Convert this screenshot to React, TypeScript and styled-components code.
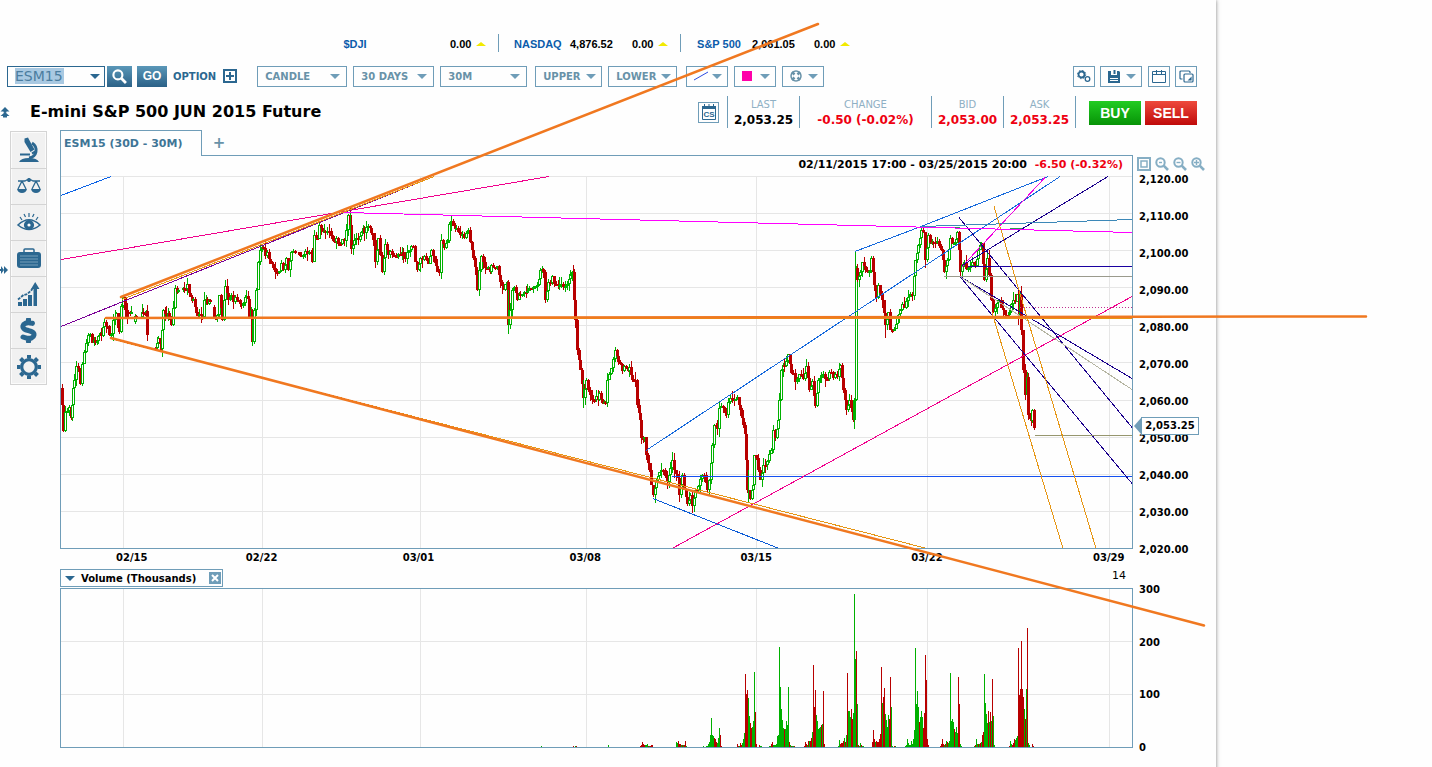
import React from "react";
import styled, { createGlobalStyle } from "styled-components";
import { FaDollarSign } from "react-icons/fa6";

const STEEL = "#6f9db8";
const DEEP = "#2b6790";
const GREEN = "#00b000";
const RED = "#b80000";

const GlobalStyle = createGlobalStyle`
  * { box-sizing: border-box; }
  body {
    margin: 0;
    background: #fefefe;
    font-family: "DejaVu Sans", Verdana, sans-serif;
    font-size: 10px;
    color: #000;
  }
  button, input, select { font: inherit; color: inherit; margin: 0; padding: 0; border-radius: 0; }
  button { cursor: pointer; background: none; border: 0; }
  svg { display: block; }
`;

const Page = styled.div`
  position: relative;
  display: grid;
  grid-template-columns: minmax(0, 1fr) 216px;
  min-height: 100vh;
  overflow: hidden;
`;

const Platform = styled.main`
  display: flex;
  flex-direction: column;
  padding: 33px 0 19px;
  box-shadow: 0 0 4px rgba(0, 0, 0, 0.5);
`;

/* ---------- index ticker ---------- */
const Ticker = styled.div`
  display: flex;
  padding-left: 316px;
  height: 20px;
  align-items: center;
  font: bold 11px/20px "Liberation Sans", Arial, sans-serif;
`;
const Index = styled.div<{ $rule?: boolean }>`
  display: grid;
  grid-template-columns: 46px 42px 22px 10px;
  column-gap: 10px;
  align-items: center;
  width: 182px;
  height: 18px;
  padding-left: 15px;
  border-left: 1px solid ${(p) => (p.$rule ? STEEL : "transparent")};
`;
const IndexName = styled.a`
  color: #0b5cab;
  text-align: center;
  text-decoration: none;
  white-space: nowrap;
`;
const Change = styled.span`
  margin-left: 10px;
`;
const Up = styled.i`
  justify-self: end;
  width: 0;
  border: 5px solid transparent;
  border-top: 0;
  border-bottom: 4px solid #f2ea00;
  margin-right: -4px;
`;

/* ---------- toolbar ---------- */
const Toolbar = styled.div`
  display: flex;
  align-items: center;
  height: 22px;
  margin: 12px 19px 0 7px;
  font-weight: bold;
  color: #6892a8;
`;
const SymbolBox = styled.div`
  display: flex;
  align-items: center;
  justify-content: space-between;
  width: 98px;
  height: 21px;
  padding: 0 4px 0 7px;
  border: 1px solid ${DEEP};
`;
const SymbolInput = styled.input`
  width: 49px;
  height: 16px;
  border: 0;
  outline: 0;
  background: #a9c9e2;
  color: #4b7d9f;
  font-size: 14px;
  font-weight: normal;
`;
const Caret = styled.i<{ $dark?: boolean }>`
  width: 0;
  height: 0;
  border: 5px solid transparent;
  border-bottom: 0;
  border-top-color: ${(p) => (p.$dark ? DEEP : STEEL)};
  pointer-events: none;
`;
const Solid = styled.button<{ $w: number; $ml: number }>`
  display: grid;
  place-items: center;
  width: ${(p) => p.$w}px;
  height: 21px;
  margin-left: ${(p) => p.$ml}px;
  background: linear-gradient(#5a97b8, #2b6187);
  color: #fff;
  font: bold 12px "Liberation Sans", Arial, sans-serif;
`;
const OptionButton = styled.button`
  display: flex;
  align-items: center;
  gap: 7px;
  margin: 0 20px 0 6px;
  color: ${DEEP};
  font-weight: bold;
`;
const Picker = styled.span<{ $w: number; $ml?: number }>`
  position: relative;
  display: inline-flex;
  align-items: center;
  width: ${(p) => p.$w}px;
  height: 21px;
  margin-left: ${(p) => p.$ml ?? 6}px;
  border: 1px solid ${STEEL};
  ${Caret} { position: absolute; right: 6px; }
`;
const Select = styled.select`
  appearance: none;
  width: 100%;
  height: 100%;
  padding: 0 7px;
  border: 0;
  background: transparent;
  font-weight: bold;
`;
const MenuButton = styled.button<{ $w: number; $ml?: number }>`
  display: flex;
  align-items: center;
  justify-content: space-between;
  width: ${(p) => p.$w}px;
  height: 21px;
  margin-left: ${(p) => p.$ml ?? 6}px;
  padding: 0 5px 0 7px;
  border: 1px solid ${STEEL};
  font-weight: bold;
`;
const IconButton = styled.button<{ $ml?: number }>`
  display: grid;
  place-items: center;
  width: 22px;
  height: 21px;
  margin-left: ${(p) => p.$ml ?? 6}px;
  border: 1px solid ${STEEL};
  color: ${DEEP};
`;
const Swatch = styled.i`
  width: 10px;
  height: 10px;
  background: #ff00a8;
`;
const Spacer = styled.span`
  flex: 1;
`;

/* ---------- instrument header ---------- */
const Header = styled.div`
  display: flex;
  align-items: center;
  height: 32px;
  margin: 9px 19px 2px 0;
`;
const Title = styled.h1`
  flex: 1;
  margin: 0 0 0 20px;
  font: bold 16px/20px "DejaVu Sans", Verdana, sans-serif;
`;
const CsButton = styled.button`
  display: grid;
  place-items: center;
  width: 21px;
  height: 21px;
  margin-right: 8px;
  border: 1px solid ${STEEL};
`;
const Quotes = styled.dl`
  display: flex;
  margin: 0 13px 0 0;
  border-right: 1px solid ${STEEL};
`;
const Quote = styled.div<{ $w: number }>`
  width: ${(p) => p.$w}px;
  height: 32px;
  border-left: 1px solid ${STEEL};
  text-align: center;
  white-space: nowrap;
`;
const QuoteLabel = styled.dt`
  color: #8fb0c4;
  line-height: 17px;
`;
const QuoteValue = styled.dd<{ $down?: boolean }>`
  margin: 0;
  font-size: 12px;
  line-height: 15px;
  font-weight: bold;
  color: ${(p) => (p.$down ? "#ee0011" : "#000")};
`;
const Trade = styled.button<{ $sell?: boolean }>`
  width: 52px;
  height: 24px;
  margin: 2px 0 0 ${(p) => (p.$sell ? 4 : 0)}px;
  background: ${(p) => (p.$sell ? "linear-gradient(#ee4a3c, #c00a0a)" : "linear-gradient(#22cc22, #079307)")};
  color: #fff;
  font: bold 14px "Liberation Sans", Arial, sans-serif;
`;

/* ---------- work area ---------- */
const Work = styled.div`
  display: grid;
  grid-template-columns: 60px minmax(0, 1fr) 83px;
`;
const Rail = styled.nav`
  display: flex;
  align-items: center;
  align-self: start;
`;
const Tools = styled.div`
  width: 37px;
  margin: 1px 0 0 2px;
  border: 1px solid #d4d4d4;
  box-shadow: inset 0 0 0 1px #fbfbfb;
  background: #f1f1f1;
`;
const Tool = styled.button`
  display: grid;
  place-items: center;
  width: 100%;
  height: 36px;
  color: ${DEEP};
  & + & { border-top: 1px solid #d4d4d4; }
`;
const Expand = styled.button`
  margin-top: 24px;
`;
const Tabs = styled.div`
  display: flex;
  height: 25px;
`;
const Tab = styled.button`
  position: relative;
  width: 142px;
  padding: 0 0 0 4px;
  margin-bottom: -1px;
  border-top: 1px solid ${STEEL};
  background: #fefefe;
  box-shadow: -1px 0 ${STEEL} inset, 1px 0 ${STEEL} inset;
  color: #3f7596;
  font-size: 11px;
  font-weight: bold;
  text-align: left;
`;
const AddTab = styled.button`
  width: 34px;
  color: #6892a8;
  font-size: 15px;
  font-weight: bold;
`;
const Panel = styled.section`
  border: 1px solid ${STEEL};
`;
const Range = styled.p`
  margin: 0;
  padding-right: 9px;
  height: 20px;
  font-size: 11px;
  line-height: 17px;
  font-weight: bold;
  text-align: right;
  span { margin-left: 4px; color: #ee0011; }
`;
const Drawing = styled.svg<{ $h: number }>`
  width: 100%;
  height: ${(p) => p.$h}px;
`;
const Dates = styled.div`
  display: grid;
  grid-template-columns: 130fr 157fr 167fr 171fr 171fr 182fr 40fr;
  height: 20px;
  padding-left: 56px;
  font-weight: bold;
  line-height: 17px;
`;
const VolumeBar = styled.div`
  display: flex;
  justify-content: space-between;
  height: 19px;
  padding-right: 7px;
`;
const VolumeTitle = styled.div`
  display: flex;
  align-items: center;
  width: 163px;
  height: 18px;
  padding: 0 1px 0 4px;
  border: 1px solid ${STEEL};
  font-weight: bold;
  ${Caret} { margin-right: 6px; }
`;
const Close = styled.button`
  display: grid;
  place-items: center;
  width: 12px;
  height: 12px;
  margin-left: auto;
  background: ${STEEL};
`;
const Period = styled.span`
  font-size: 11px;
  line-height: 14px;
`;
const Axis = styled.div`
  position: relative;
  padding: 27px 0 0 6px;
  font-weight: bold;
  line-height: 12px;
`;
const ZoomRow = styled.div`
  display: flex;
  gap: 4px;
  height: 17px;
  margin-left: -2px;
  color: ${STEEL};
  button { display: grid; place-items: center; width: 14px; height: 14px; color: #86aec4; }
`;
const Scale = styled.div<{ $h: number; $mt?: number }>`
  display: flex;
  flex-direction: column;
  justify-content: space-between;
  height: ${(p) => p.$h}px;
  margin-top: ${(p) => p.$mt ?? 0}px;
`;
const PriceFlag = styled.output`
  position: absolute;
  top: 287px;
  left: 8px;
  display: grid;
  place-items: center;
  width: 58px;
  height: 18px;
  border: 1px solid ${STEEL};
  background: #fff;
  &::before {
    content: "";
    position: absolute;
    left: -8px;
    border: 8px solid transparent;
    border-left: 0;
    border-right: 7px solid ${STEEL};
  }
`;
const Ink = styled.svg`
  position: absolute;
  top: 0;
  left: 0;
  width: 100%;
  height: 767px;
  pointer-events: none;
`;

/* ---------- data ---------- */
const GRID_X = [123, 262, 420, 586, 756, 927, 1109];
const GRID_Y = [214, 251, 288, 326, 363, 401, 438, 475, 512];
const DATES = ["02/15", "02/22", "03/01", "03/08", "03/15", "03/22", "03/29"];
const PRICES = ["2,120.00", "2,110.00", "2,100.00", "2,090.00", "2,080.00", "2,070.00", "2,060.00", "2,050.00", "2,040.00", "2,030.00", "2,020.00"];

/* price path: x,y turning points; "/" marks a session gap */
const PATH = `61,388 62,405 63,431 65,412 67,408 69,410 71,418 72,405 73,388 74,380 76,366 79,370 80,384 82,364 84,352 86,345 88,338 90,335 92,343 95,341 98,336 101,332 104,322 107,325 109,335 111,338 113,320 116,314 118,328 119,330 121,306 123,300 125,310 127,318 / 128,312 131,315 / 133,322 136,316 / 140,317 143,313 146,308 147,335 / 153,348 155,348 158,338 161,349 162,330 163,310 166,315 169,316 171,325 173,308 175,288 178,293 / 181,290 184,290 187,288 190,297 193,300 196,313 199,315 202,318 204,300 207,303 210,303 / 213,307 214,318 217,312 219,295 222,320 224,300 225,286 228,300 231,297 235,300 238,302 241,305 243,300 246,296 248,298 249,318 251,310 252,342 254,310 256,290 258,262 260,250 263,252 267,253 270,260 273,268 277,270 281,265 283,272 286,258 288,270 291,252 295,257 / 297,252 303,253 307,256 311,250 312,262 314,235 317,242 319,225 322,232 325,232 329,231 333,238 336,240 340,243 344,240 346,230 348,215 350,225 351,249 354,240 358,240 361,232 364,230 368,229 371,232 373,240 375,262 378,238 380,255 382,272 385,244 388,255 392,252 396,255 400,253 405,256 408,250 411,243 413,245 415,262 417,270 420,258 424,260 428,261 431,250 434,262 437,270 439,275 441,240 444,248 447,243 449,224 453,226 456,230 460,236 464,234 468,233 470,242 473,258 476,275 477,290 479,270 481,256 485,268 488,270 493,268 497,267 500,282 503,290 507,285 508,325 510,310 512,290 514,285 517,300 520,295 524,295 529,292 533,288 537,288 540,270 543,275 545,300 548,282 552,280 556,285 559,283 563,288 567,282 572,272 574,300 575,320 577,350 580,370 583,398 586,380 588,390 592,400 596,400 599,395 602,403 605,400 607,380 611,368 615,350 618,362 622,368 626,368 629,370 632,380 635,382 637,405 640,420 641,438 644,435 646,455 649,470 651,485 653,495 656,480 659,472 663,470 667,482 670,468 672,460 674,470 677,478 679,495 682,475 684,490 687,504 690,495 692,506 695,490 698,485 702,478 704,475 707,490 709,480 712,445 714,425 717,430 719,408 723,410 726,415 728,402 732,402 737,400 740,410 743,425 745,430 746,460 747,490 750,495 753,485 754,455 756,460 760,480 763,465 767,458 771,450 773,430 775,438 778,420 779,400 781,370 784,368 788,354 791,373 795,378 799,375 803,380 806,366 809,390 812,385 815,406 818,380 821,374 825,377 831,375 837,373 840,365 843,390 846,410 849,400 851,408 853,420 854,400 856,268 857,280 860,272 862,262 865,270 869,268 871,258 874,285 876,298 878,285 882,300 885,325 888,312 890,330 894,330 897,318 900,310 904,305 908,297 912,292 915,260 918,245 921,230 923,230 925,260 928,235 930,240 935,242 941,248 944,272 947,260 950,238 954,245 957,232 959,250 960,272 964,265 968,270 972,262 975,268 978,250 981,247 984,280 987,258 989,275 991,300 993,312 997,303 1001,305 1005,315 1009,308 1013,300 1017,297 1019,315 1020,294 1021,330 1023,370 1025,395 1027,377 1028,415 1031,420 1032,410 1034,428`;

type Candle = { x: number; open: number; close: number; hi: number; lo: number };

function buildCandles(): Candle[] {
  const out: Candle[] = [];
  let seed = 17;
  const rnd = () => {
    seed = (seed * 1103515245 + 12345) % 2147483648;
    return seed / 2147483648;
  };
  PATH.split("/").forEach((session) => {
    const pts = session.trim().split(" ").map((p) => p.split(",").map(Number));
    let last = pts[0][1];
    for (let i = 1; i < pts.length; i++) {
      const [x0, y0] = pts[i - 1];
      const [x1, y1] = pts[i];
      const steps = Math.max(1, Math.round((x1 - x0) / 2));
      for (let s = 1; s <= steps; s++) {
        const t = s / steps;
        const flat = Math.abs(y1 - y0) < 8;
        const close = Math.round(y0 + (y1 - y0) * t + (flat ? (rnd() - 0.5) * 8 : 0));
        const top = Math.min(last, close);
        const bottom = Math.max(last, close);
        const wick = rnd() > 0.5 ? 8 : 3;
        out.push({ x: Math.round(x0 + (x1 - x0) * t), open: last, close, hi: top - Math.round(rnd() * wick), lo: bottom + Math.round(rnd() * wick) });
        last = close;
      }
    }
  });
  return out;
}
const CANDLES = buildCandles();

/* volume bars by session: first x, then heights; negative is a down bar */
const VOLUME: [number, number[]][] = [
  [541, [1]], [573, [-1, 0, 1, -1]], [608, [2]],
  [640, [-1, -2, -5, -3, -2, 2, 2, 3, -1, 1, -1, -2, -2]],
  [676, [5, 4, -6, -3, -3, 2, -2, 2, -2, -6, 1]],
  [703, [1, 0, 0, 1, 1, 3, 5, 12, 29, 12, 11, -9, -8, -5, 4, 9, 19, -12, -1]],
  [737, [-3, -1, 1, -4, -2, 4, 8, 14, -73, -53, -57, 49, 31, -24, -19, 20, 26, 75, -35, -3, 0, 0, -2, 1, 1]],
  [769, [1, 1, -3, -5, 2, 2, 2, 3, 11, 12, 100, 60, 38, 27, 19, -18, 18, 26, 22, 60, -5, 2, -1, 1, 1, -1]],
  [804, [-1, -5, -3, 2, -6, 6, -6, -9, 15, -82, -40, -57, 32, 26, 18, 19, 20, -22, 23, -56, -3]],
  [838, [1, 7, -3, -4, -4, -6, 9, -5, 12, -74, 36, 36, 30, -38, -28, 34, 153, 88, -96, 43, -2, 1, 4, -2, 1, 1]],
  [872, [-5, -17, -8, 5, -6, -5, -5, -8, -13, -80, 44, -50, -59, 33, 27, 20, 32, -28, -70, 40, 1, 0, -1, 1]],
  [905, [1, 2, 8, 4, 2, 2, 6, 3, 8, 17, 99, 43, 56, 40, -25, 30, 36, 30, -19, -34, -92, -67, -8, -2]],
  [940, [-1, -3, -8, -3, 2, -3, 6, -5, 4, 6, 74, 26, 28, 25, -18, 15, 20, 14, -70, -43, 3, 1]],
  [974, [1, -2, 8, 3, -3, 3, -4, 5, -12, -15, 73, 44, 33, 24, -36, 25, -35, 26, -68, 31, 2]],
  [1009, [-1, 6, 3, -2, -4, -8, 7, 9, 11, -99, -52, -58, -106, -58, -50, 38, -28, 58, -119, 4, 2, 0, 0, -3, -1]],
];

const SPREAD: [number, number, number, number, string][] = [
  [61, 195, 111, 176, "#0a62e6"], [646, 450, 1060, 176, "#1468dc"],
  [855, 251, 921, 226, "#1468dc"], [921, 226, 1048, 176, "#1468dc"],
  [653, 498, 779, 548, "#0a5ad6"], [672, 476, 1132, 476, "#1450f0"],
  [61, 259, 549, 176, "#f0008c"], [672, 548, 1132, 296, "#f0008c"],
  [61, 326, 434, 176, "#7a0096"], [962, 266, 1045, 177, "#f000e0"],
  [962, 265, 1108, 176, "#1a008c"], [968, 266, 1132, 266, "#1a00a0"],
  [959, 217, 1132, 427, "#1a008c"], [960, 276, 1132, 378, "#1a008c"],
  [960, 276, 1132, 483, "#1a008c"], [921, 226, 1132, 219, "#3c88b8"],
  [944, 276, 1132, 276, "#9a9a8c"], [960, 276, 1132, 389, "#b4b4a0"],
  [1035, 435, 1132, 435, "#96966e"], [994, 206, 1096, 548, "#e69614"],
  [992, 312, 1063, 548, "#e69614"], [122, 299, 434, 176, "#e69614"],
  [110, 338, 927, 548, "#e69614"], [104, 318, 1132, 318, "#e69614"],
  [921, 227, 960, 227, "#2a9a50"], [1010, 228, 1034, 229, "#2a9a50"],
];

/* ---------- icons ---------- */
const Lens = ({ mark = "", size = 14 }: { mark?: string; size?: number }) => (
  <svg width={size} height={size} viewBox="0 0 14 14" fill="none" stroke="currentColor" strokeWidth="2">
    <circle cx="5.5" cy="5.5" r="4.2" />
    <path d="M8.7 8.7 13 13" strokeWidth="2.6" />
    {mark && <path d={mark} strokeWidth="1.4" />}
  </svg>
);
const Microscope = () => (
  <svg width="24" height="26" viewBox="0 0 24 26" fill="currentColor">
    <path d="M7.500 1.500 11 .5l1 2 5.500 10-4 2.500L7.500 5zM14.500 15.500l3.500-2 1 2-3.500 2z" />
    <path d="M16 6q5 3 4 9-1 5-7 6" fill="none" stroke="currentColor" strokeWidth="2.800" transform="translate(-1 0)" />
    <path d="M3 16.500h10v2H3zM2 25q2-4 10-4t10 4z" />
  </svg>
);
const Scales = () => (
  <svg width="26" height="24" viewBox="0 0 26 24" fill="none" stroke="currentColor" strokeWidth="1.3">
    <path d="M2 6h7q4-3 8 0h7M13 3v4M6 6 2 14M6 6l4 8M20 6l-4 8M20 6l4 8" />
    <path d="M1 14h10q-1 4-5 4t-5-4ZM15 14h10q-1 4-5 4t-5-4Z" fill="currentColor" stroke="none" />
    <circle cx="13" cy="5" r="2" fill="currentColor" stroke="none" />
  </svg>
);
const Eye = () => (
  <svg width="26" height="24" viewBox="0 0 26 24" fill="none" stroke="currentColor" strokeWidth="1.6">
    <path d="M2 14Q13 3.500 24 14 13 23 2 14Z" />
    <circle cx="13" cy="14" r="4.300" fill="currentColor" />
    <circle cx="13" cy="14" r="1.600" fill="#fff" stroke="none" />
    <path d="M13 2v4M8 3l1.500 3M18 3l-1.500 3M4 6l2 3M22 6l-2 3" strokeWidth="1.200" />
  </svg>
);
const Briefcase = () => (
  <svg width="26" height="24" viewBox="0 0 26 24">
    <path d="M8 5V3q0-1 1-1h8q1 0 1 1v2" fill="none" stroke="currentColor" strokeWidth="1.500" />
    <rect x="1" y="5" width="24" height="16" rx="3" fill="currentColor" />
    <path d="M4 9h18M4 12h18M4 15h18M4 18h18" stroke="#7fa6c0" strokeWidth="0.900" />
  </svg>
);
const Growth = () => (
  <svg width="24" height="26" viewBox="0 0 24 26" fill="currentColor">
    <path d="M1 20h4v4H1zM6 17h4v7H6zM11 13h4v11h-4zM16.500 6h3.500v18h-3.500zM18.200 0l4.300 7h-8.500z" />
    <path d="M1 17.500 6.500 13l4-1 5-5" fill="none" stroke="currentColor" strokeWidth="1.800" strokeDasharray="3 1" />
  </svg>
);
const Gear = () => (
  <svg width="26" height="26" viewBox="-13 -13 26 26" stroke="currentColor" fill="none">
    <circle r="7.300" strokeWidth="3.200" />
    {[0, 45, 90, 135, 180, 225, 270, 315].map((a) => (
      <path key={a} d="M0-8.500V-12" strokeWidth="4" transform={`rotate(${a})`} />
    ))}
  </svg>
);
const Chevrons = ({ side }: { side?: boolean }) => (
  <svg width={side ? 8 : 10} height="12" viewBox={side ? "0 0 8 12" : "0 0 10 12"} fill={DEEP}>
    {side ? <path d="M0 5h1V2l3 4-3 4V7H0zM4 2l4 4-4 4z" /> : <path d="M5 1 9.500 5.500H6.500V6.500H3.500V5.500H.5zM5 6l4.500 4H7v1.500H3V10H.5z" />}
  </svg>
);

const TOOLS: [string, React.ReactNode][] = [
  ["Research", <Microscope />],
  ["Compare", <Scales />],
  ["Watch", <Eye />],
  ["Portfolio", <Briefcase />],
  ["Trends", <Growth />],
  ["Trade", <FaDollarSign size={25} strokeWidth={40} stroke="currentColor" />],
  ["Settings", <Gear />],
];
const INDEXES = [["$DJI", "", "0.00"], ["NASDAQ", "4,876.52", "0.00"], ["S&P 500", "2,061.05", "0.00"]];
const QUOTES: [string, string, number, boolean][] = [
  ["LAST", "2,053.25", 72, false],
  ["CHANGE", "-0.50 (-0.02%)", 132, true],
  ["BID", "2,053.00", 72, true],
  ["ASK", "2,053.25", 72, true],
];

const PriceChart = () => (
  <Drawing $h={372} viewBox="61 176 1071 372" preserveAspectRatio="none" shapeRendering="crispEdges" role="img" aria-label="ESM15 price">
    <g stroke="#e6e6e6">
      <path d="M61 176.500H1132" />
      {GRID_Y.map((y) => <path key={y} d={`M61 ${y - 0.5}H1132`} />)}
      {GRID_X.map((x) => <path key={x} d={`M${x + 0.5} 176V548`} />)}
    </g>
    {CANDLES.map((c, i) => {
      const up = c.close < c.open;
      const top = Math.min(c.open, c.close);
      const h = Math.max(2, Math.abs(c.close - c.open));
      return (
        <g key={i}>
          <path d={`M${c.x + 0.5} ${c.hi}V${c.lo}`} stroke={up ? GREEN : RED} />
          {up && h > 3
            ? <rect x={c.x - 0.5} y={top + 0.5} width={2} height={h - 1} fill="#fff" stroke={GREEN} />
            : <rect x={c.x - 1} y={top} width={3} height={h} fill={up ? GREEN : RED} />}
        </g>
      );
    })}
    <path d="M508.500 290V334M583.500 380V408M748.500 470V503M854.500 400V429M252.500 320V346M350.500 213V240M855.500 251V400" stroke={GREEN} />
    <path d="M573.500 265V300M1018.500 290V325M477.500 270V290M885.500 300V338" stroke={RED} />
    {SPREAD.map(([x1, y1, x2, y2, c], i) => (
      <line key={i} x1={x1} y1={y1 + 0.5} x2={x2} y2={y2 + 0.5} stroke={c} />
    ))}
    <path d="M344 212.500 1132 232.500" stroke="#ff00ff" />
    <path d="M1020 307.500H1132" stroke="#c03090" strokeDasharray="1 2" />
  </Drawing>
);

const VolumeChart = () => (
  <Drawing $h={158} viewBox="61 589 1071 158" preserveAspectRatio="none" shapeRendering="crispEdges" role="img" aria-label="Volume in thousands">
    <g stroke="#e6e6e6">
      <path d="M61 641.500H1132M61 694.500H1132" />
      {GRID_X.map((x) => <path key={x} d={`M${x + 0.5} 589V747`} />)}
    </g>
    {VOLUME.flatMap(([x0, bars]) =>
      bars.map((v, i) => <rect key={`${x0}-${i}`} x={x0 + i} y={747 - Math.abs(v)} width={1} height={Math.abs(v)} fill={v > 0 ? GREEN : RED} />)
    )}
  </Drawing>
);

export default function App() {
  return (
    <Page>
      <GlobalStyle />
      <Platform>
        <Ticker>
          {INDEXES.map(([name, value, change], i) => (
            <Index key={name} $rule={i > 0}>
              <IndexName href="#">{name}</IndexName>
              <span>{value}</span>
              <Change>{change}</Change>
              <Up />
            </Index>
          ))}
        </Ticker>

        <Toolbar>
          <SymbolBox>
            <SymbolInput aria-label="Symbol" defaultValue="ESM15" />
            <Caret $dark />
          </SymbolBox>
          <Solid $w={25} $ml={2} aria-label="Search"><Lens size={15} /></Solid>
          <Solid $w={30} $ml={5}>GO</Solid>
          <OptionButton>
            OPTION
            <svg width="14" height="14" viewBox="0 0 14 14" fill="none" stroke={DEEP} strokeWidth="2"><path d="M1 1h12v12H1zM7 3v8M3 7h8" /></svg>
          </OptionButton>
          <Picker $w={90} $ml={0}><Select aria-label="Chart type"><option>CANDLE</option></Select><Caret /></Picker>
          <Picker $w={81}><Select aria-label="Range"><option>30 DAYS</option></Select><Caret /></Picker>
          <Picker $w={87}><Select aria-label="Interval"><option>30M</option></Select><Caret /></Picker>
          <MenuButton $w={67} $ml={8}>UPPER<Caret /></MenuButton>
          <MenuButton $w={69}>LOWER<Caret /></MenuButton>
          <MenuButton $w={42} $ml={9} aria-label="Line tool">
            <svg width="15" height="10" viewBox="0 0 15 10"><path d="M0 9 14 1" stroke="#2a4ae0" /></svg>
            <Caret />
          </MenuButton>
          <MenuButton $w={42} aria-label="Colour"><Swatch /><Caret /></MenuButton>
          <MenuButton $w={42} aria-label="Crosshair">
            <svg width="12" height="12" viewBox="-6 -6 12 12" fill="none" stroke="currentColor">
              <circle r="5" strokeWidth="1.500" />
              <path d="M-4-4-1.500-1.500M4-4 1.500-1.500M-4 4-1.500 1.500M4 4 1.500 1.500" strokeWidth="2.500" />
            </svg>
            <Caret />
          </MenuButton>
          <Spacer />
          <IconButton aria-label="Preferences">
            <svg width="14" height="13" viewBox="0 0 14 13" fill="none" stroke="currentColor">
              <circle cx="4.500" cy="4.500" r="3" strokeWidth="1.800" />
              <circle cx="4.500" cy="4.500" r="4.200" strokeDasharray="1.500 1.800" />
              <circle cx="10.500" cy="9" r="2.300" strokeWidth="1.300" />
            </svg>
          </IconButton>
          <MenuButton $w={42} $ml={5} aria-label="Save">
            <svg width="12" height="13" viewBox="0 0 12 13" fill={DEEP}><path d="M0 1h3v4h6V1h2l1 1v11H0zM5.500 0h2v4h-2zM2 8v1h8V8zM2 10v1h8v-1z" fillRule="evenodd" /></svg>
            <Caret />
          </MenuButton>
          <IconButton aria-label="Calendar">
            <svg width="14" height="13" viewBox="0 0 14 13" fill="none" stroke="currentColor"><path d="M.5 1.500h13v11H.5zM.5 4.500h13M4.500 0v4M9.500 0v4" /></svg>
          </IconButton>
          <IconButton $ml={5} aria-label="Windows">
            <svg width="15" height="13" viewBox="0 0 15 13" fill="none" stroke="currentColor" strokeWidth="1.200">
              <path d="M3.500 9H2Q1 9 1 8V2q0-1 1-1h8q1 0 1 1v1" />
              <rect x="5" y="4" width="9" height="8" rx="1" /><path d="M10 10l2-2v2z" />
            </svg>
          </IconButton>
        </Toolbar>

        <Header>
          <Chevrons />
          <Title>E-mini S&amp;P 500 JUN 2015 Future</Title>
          <CsButton aria-label="Contract calendar">
            <svg width="16" height="17" viewBox="0 0 16 17">
              <path d="M1.500 4.500h13v11h-13z" fill="none" stroke={DEEP} />
              <path d="M1 2h14v3H1zM3 0h1v2H3zM7.500 0h1v2h-1zM12 0h1v2h-1z" fill={DEEP} />
              <text x="8" y="13" textAnchor="middle" fontSize="8" fontWeight="bold" fontFamily="Liberation Sans, sans-serif" fill={DEEP}>CS</text>
            </svg>
          </CsButton>
          <Quotes>
            {QUOTES.map(([label, value, w, down]) => (
              <Quote key={label} $w={w}>
                <QuoteLabel>{label}</QuoteLabel>
                <QuoteValue $down={down}>{value}</QuoteValue>
              </Quote>
            ))}
          </Quotes>
          <Trade>BUY</Trade>
          <Trade $sell>SELL</Trade>
        </Header>

        <Work>
          <Rail>
            <Expand aria-label="Expand tools"><Chevrons side /></Expand>
            <Tools>
              {TOOLS.map(([label, icon]) => <Tool key={label} aria-label={label}>{icon}</Tool>)}
            </Tools>
          </Rail>
          <div>
            <Tabs>
              <Tab>ESM15 (30D - 30M)</Tab>
              <AddTab aria-label="Add chart">+</AddTab>
            </Tabs>
            <Panel>
              <Range>02/11/2015 17:00 - 03/25/2015 20:00 <span>-6.50 (-0.32%)</span></Range>
              <PriceChart />
            </Panel>
            <Dates>{DATES.map((d) => <span key={d}>{d}</span>)}</Dates>
            <VolumeBar>
              <VolumeTitle>
                <Caret $dark />
                Volume (Thousands)
                <Close aria-label="Remove volume">
                  <svg width="8" height="8" viewBox="0 0 8 8"><path d="M1 1l6 6M7 1 1 7" stroke="#fff" strokeWidth="2" /></svg>
                </Close>
              </VolumeTitle>
              <Period>14</Period>
            </VolumeBar>
            <Panel><VolumeChart /></Panel>
          </div>
          <Axis>
            <ZoomRow>
              <button aria-label="Fit">
                <svg width="14" height="14" viewBox="0 0 14 14" fill="none" stroke="currentColor"><path d="M1 1h12v12H1z" strokeWidth="2" /><path d="M4 4h6v6H4z" strokeWidth="1.500" /></svg>
              </button>
              <button aria-label="Reset zoom"><Lens mark="M4 5.500h3" /></button>
              <button aria-label="Zoom out"><Lens mark="M3.500 5.500h4" /></button>
              <button aria-label="Zoom in"><Lens mark="M3 5.500h5M5.500 3v5" /></button>
            </ZoomRow>
            <Scale $h={382}>{PRICES.map((p) => <span key={p}>{p}</span>)}</Scale>
            <Scale $h={170} $mt={28}>{["300", "200", "100", "0"].map((v) => <span key={v}>{v}</span>)}</Scale>
            <PriceFlag>2,053.25</PriceFlag>
          </Axis>
        </Work>
      </Platform>

      <Ink viewBox="0 0 1432 767" preserveAspectRatio="none" fill="none" stroke="#f07820" strokeWidth="2.500" strokeLinecap="round" aria-hidden="true">
        <path d="M121 297 818 24M106 318 1366 316.500M111 338 1204 625.500" />
      </Ink>
    </Page>
  );
}
